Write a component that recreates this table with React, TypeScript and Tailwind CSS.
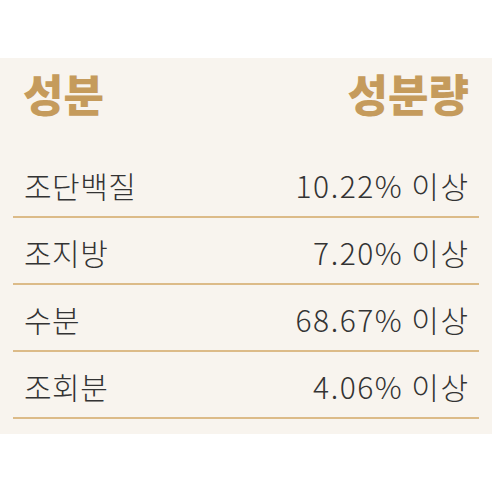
import React from "react";

const rows = [
  { name: "조단백질", value: "10.22% 이상" },
  { name: "조지방", value: "7.20% 이상" },
  { name: "수분", value: "68.67% 이상" },
  { name: "조회분", value: "4.06% 이상" },
];

const App = () => {
  return (
    <div
      className="w-[492px] h-[492px] bg-white pt-[58px]"
      style={{ fontFamily: '"Noto Sans CJK KR", "Noto Sans", sans-serif' }}
    >
      <div className="bg-[#f8f4ee] px-[13px] pb-[15px]">
        <div className="flex items-center justify-between h-[93px] pb-[24px] px-[10px] text-[44px] font-black text-[#c59b5c]">
          <span>성분</span>
          <span>성분량</span>
        </div>
        {rows.map((row) => (
          <div
            key={row.name}
            className="flex items-center justify-between h-[67px] px-[11px] pt-[3px] border-b-2 border-[#dcbb88] text-[30px] font-light text-[#333333]"
          >
            <span className="tracking-[0.5px]">{row.name}</span>
            <span className="tracking-[1.5px] -mr-[1.5px]">{row.value}</span>
          </div>
        ))}
      </div>
    </div>
  );
};

export default App;
